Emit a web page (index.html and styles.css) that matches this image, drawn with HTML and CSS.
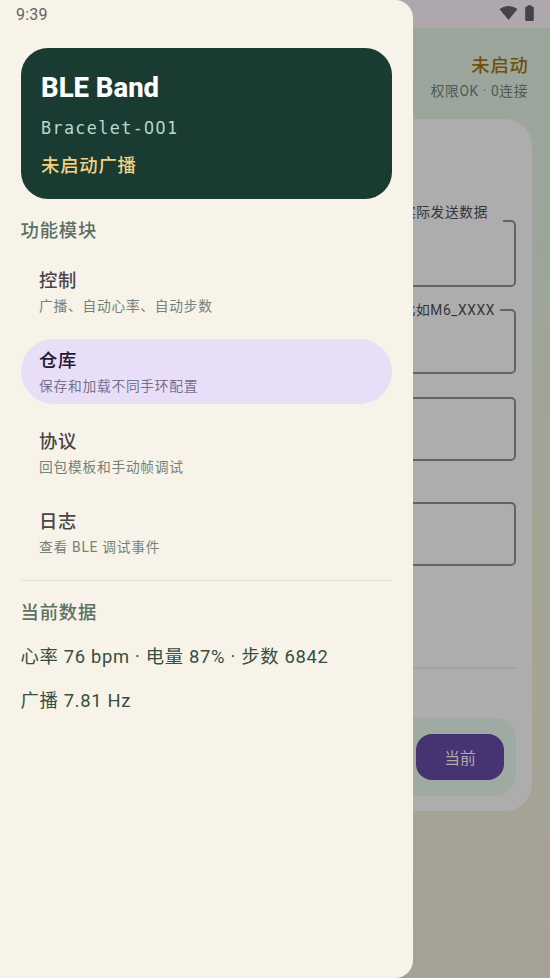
FILE: index.html
```html
<!DOCTYPE html>
<html lang="zh-CN">
<head>
<meta charset="utf-8">
<title>BLE Band</title>
<link rel="stylesheet" href="styles.css">
</head>
<body>
<div class="app">
  <div class="system">
    <svg width="19" height="16" viewBox="0 0 19 16"><path d="M0.5 4Q9.5-2 18.500 4L9.500 15Z"/></svg>
    <svg width="9" height="17" viewBox="0 0 9 17"><path d="M2.500 1.500V.2h4v1.300H7.500Q8.800 1.500 8.800 3V14.500Q8.800 16 7.500 16H1.500Q.2 16 .2 14.500V3Q.2 1.500 1.500 1.500Z"/></svg>
  </div>
  <main class="page">
    <header class="status">
      <div class="status-title">未启动</div>
      <div class="status-sub">权限OK · 0连接</div>
    </header>
    <section class="sheet">
      <fieldset class="field field-a"><legend>实际发送数据</legend></fieldset>
      <fieldset class="field field-b"><legend>比如M6_XXXX</legend></fieldset>
      <div class="field field-c"></div>
      <div class="field field-d"></div>
      <hr class="rule">
      <div class="profile"><button class="current">当前</button></div>
    </section>
  </main>
  <aside class="drawer">
    <div class="clock">9:39</div>
    <div class="device">
      <div class="device-name">BLE Band</div>
      <div class="device-id">Bracelet-<span class="zeros">00</span>1</div>
      <div class="device-state">未启动广播</div>
    </div>
    <h2 class="heading">功能模块</h2>
    <nav class="menu">
      <div class="item"><div class="name">控制</div><div class="desc">广播、自动心率、自动步数</div></div>
      <div class="item active"><div class="name">仓库</div><div class="desc">保存和加载不同手环配置</div></div>
      <div class="item"><div class="name">协议</div><div class="desc">回包模板和手动帧调试</div></div>
      <div class="item"><div class="name">日志</div><div class="desc">查看 BLE 调试事件</div></div>
    </nav>
    <div class="data">
      <h2 class="heading">当前数据</h2>
      <p>心率 76 bpm · 电量 87% · 步数 6842</p>
      <p>广播 7.81 Hz</p>
    </div>
  </aside>
</div>
</body>
</html>
```
FILE: styles.css
```css
* { box-sizing: border-box; }
body { margin: 0; font-family: Roboto, "Noto Sans CJK SC", sans-serif; }
.app {
  position: relative;
  width: 550px;
  height: 978px;
  overflow: hidden;
  display: flex;
  flex-direction: column;
  background: #a5a194;
}
.system {
  height: 28px;
  flex: none;
  background: #aea8ae;
  display: flex;
  justify-content: flex-end;
  gap: 7px;
  padding: 5px 16px 0 0;
  fill: #454346;
}
.page {
  flex: 1;
  padding: 25px 18px 0;
  background: linear-gradient(165deg, #9ba69d 0%, #9ca59b 30%, #a4a494 62%, #a5a395 84%, #a6a195 100%);
}
.status {
  height: 66px;
  padding-right: 4px;
  text-align: right;
}
.status-title {
  font-size: 18.3px;
  font-weight: 500;
  line-height: 26px;
  letter-spacing: .8px;
  margin-right: -.6px;
  color: #70500b;
}
.status-sub {
  font-size: 13.75px;
  line-height: 24px;
  letter-spacing: .6px;
  color: #4f5b55;
}
.sheet {
  height: 692px;
  border-radius: 27px;
  background: #adadad;
  padding: 92px 16px 0;
}
.field {
  margin: 0;
  padding: 0 6px;
  height: 64px;
  border: 2px solid #646366;
  border-radius: 5px;
}
.field legend {
  margin-left: auto;
  font-size: 13.75px;
  line-height: 20px;
  letter-spacing: .6px;
  color: #363438;
}
.field-a { height: 76px; padding-right: 7px; }
.field-a legend { padding: 0 15px 0 6px; margin-right: 4px; transform: translateY(-9px); }
.field-b { height: 74px; margin-top: 13px; }
.field-b legend { padding: 0 5px 0 6px; margin-right: 8px; }
.field-c { margin-top: 23px; }
.field-d { margin-top: 41px; }
.rule {
  margin: 101px 0 0;
  border: 0;
  height: 2px;
  background: #a2a1a5;
}
.profile {
  height: 78px;
  margin-top: 49px;
  border-radius: 21px;
  background: #9faaa2;
  display: flex;
  align-items: center;
  justify-content: flex-end;
  padding-right: 12px;
}
.current {
  width: 88px;
  height: 46px;
  border: 0;
  border-radius: 16px;
  background: #463371;
  color: #aeaaae;
  font: 400 15.800px/20px Roboto, "Noto Sans CJK SC", sans-serif;
  padding: 3px 0 0;
}
.drawer {
  position: absolute;
  inset: 0 auto 0 0;
  width: 412.500px;
  padding: 0 20.500px;
  border-radius: 0 18px 18px 0;
  background: #f7f3e8;
}
.clock {
  height: 48px;
  padding-top: 4px;
  margin-left: -4.500px;
  font-size: 16px;
  line-height: 21px;
  letter-spacing: .2px;
  color: #65635e;
}
.device {
  height: 151.400px;
  padding: 23px 20.500px 0;
  border-radius: 27px;
  background: #193b32;
}
.device-name {
  font-size: 27.500px;
  font-weight: 800;
  line-height: 34px;
  letter-spacing: 0;
  color: #fff;
}
.device-id {
  margin-top: 11px;
  font: 16.800px/24px "DejaVu Sans Mono", monospace;
  letter-spacing: 1.350px;
  color: #b5dccb;
}
.zeros { font-family: Roboto, sans-serif; font-size: 17.800px; letter-spacing: 1.450px; }
.device-state {
  margin-top: 13px;
  font-size: 18.330px;
  font-weight: 500;
  line-height: 26px;
  letter-spacing: .8px;
  color: #f2d283;
}
.heading {
  margin: 18px 0 0;
  font-size: 18.330px;
  font-weight: 500;
  line-height: 28px;
  letter-spacing: .8px;
  color: #5c7063;
}
.menu {
  margin-top: 13.600px;
  display: grid;
  gap: 15.500px;
}
.item {
  height: 64.800px;
  padding: 8.200px 18.500px 0;
  border-radius: 33px;
  color: #49454a;
}
.active { background: #e8def7; color: #1f1733; }
.name {
  font-size: 18.330px;
  font-weight: 500;
  line-height: 27px;
  letter-spacing: .6px;
}
.desc {
  font-size: 13.750px;
  line-height: 25px;
  letter-spacing: .730px;
  color: #74827a;
}
.active .desc { color: #77718a; }
.data {
  margin-top: 15px;
  border-top: 1px solid #dce2d7;
}
.data p {
  margin: 16px 0 0;
  font-size: 18.330px;
  line-height: 28px;
  letter-spacing: .700px;
  color: #354e43;
}
```
